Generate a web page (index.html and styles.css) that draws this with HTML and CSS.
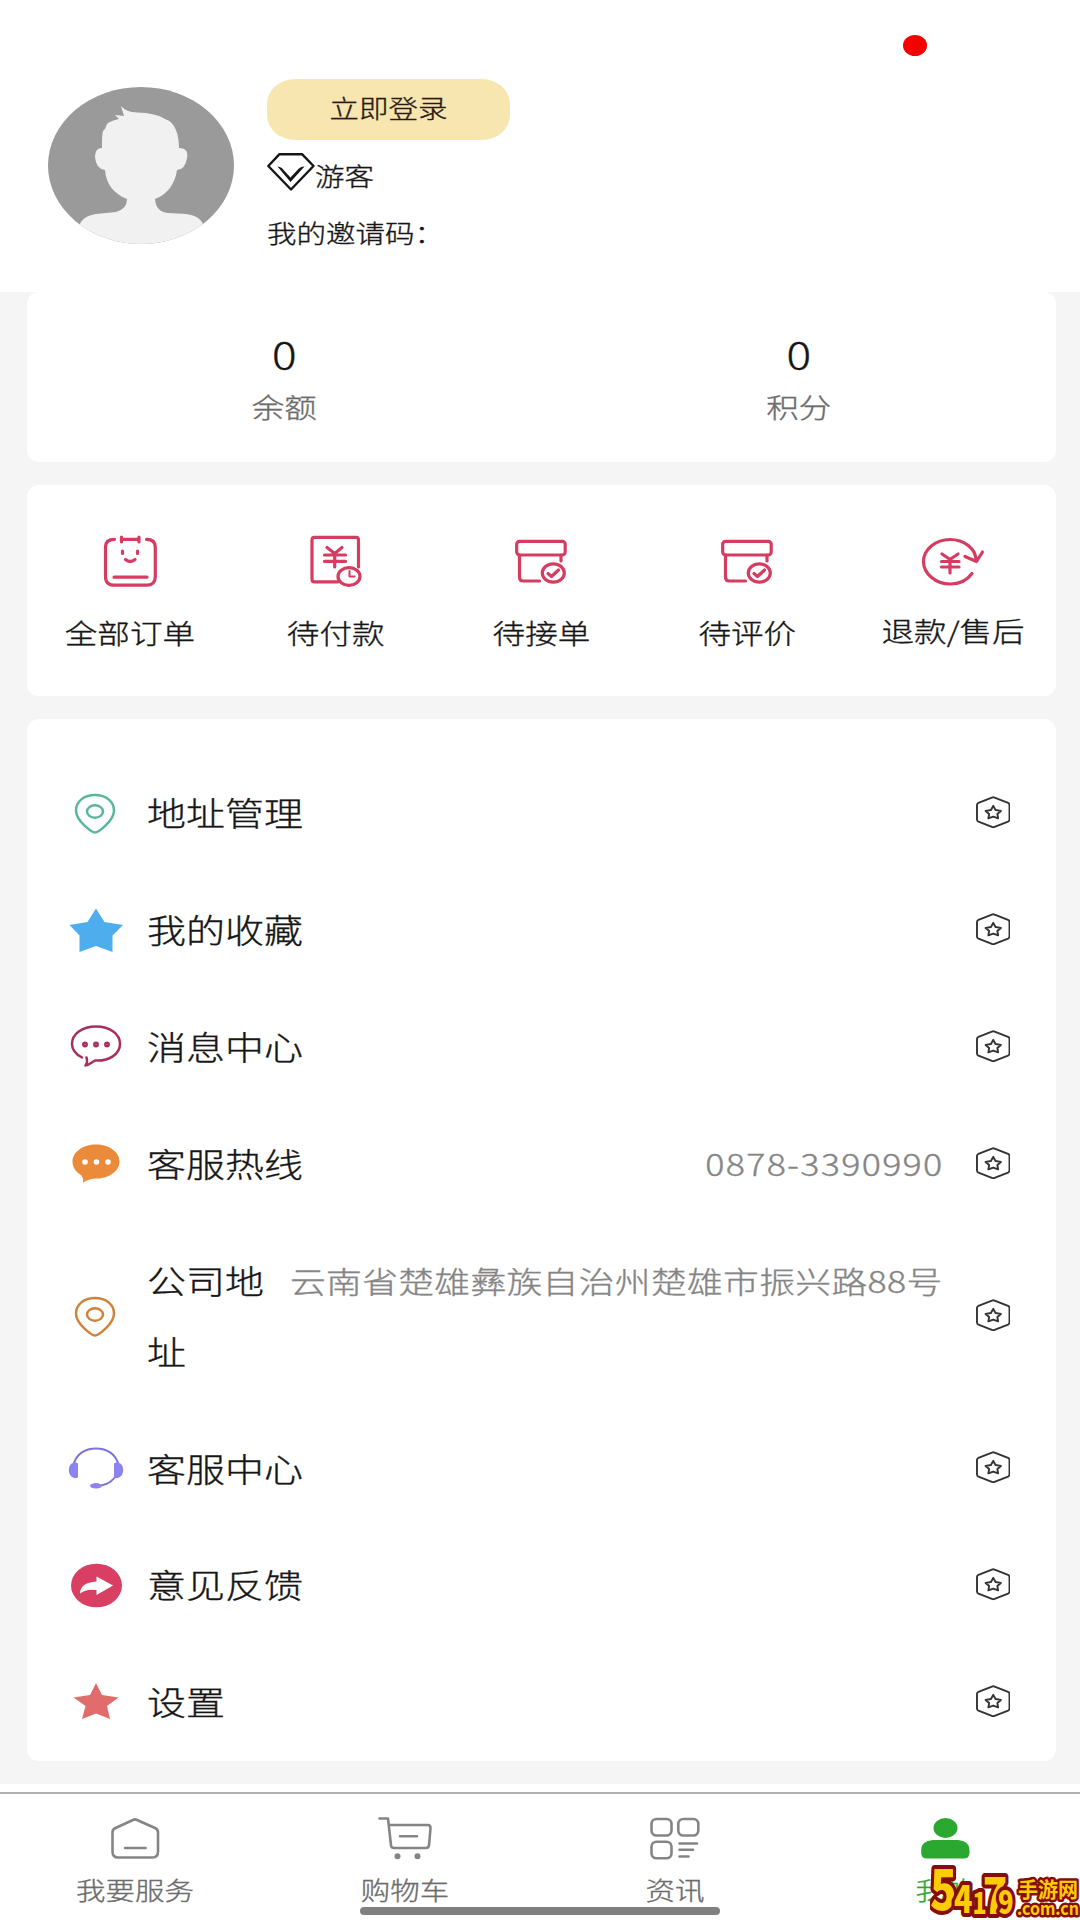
FILE: index.html
```html
<!DOCTYPE html>
<html lang="zh-CN">
<head>
<meta charset="utf-8">
<title>我的</title>
<link rel="stylesheet" href="styles.css">
</head>
<body>
<svg class="sprite" aria-hidden="true">
  <symbol id="hex" viewBox="0 0 36 34">
    <path d="M16.6 1.6Q18 1 19.4 1.6L33.5 7.3Q35 8 35 9.5V24.5Q35 26 33.5 26.7L19.4 32.400Q18 33 16.600 32.400L2.500 26.700Q1 26 1 24.500V9.500Q1 8 2.500 7.300Z"/>
    <path d="M18 10.300L20.400 14.700L26 15.600L22.300 18.800L23.100 23.400L18 21.500L12.900 23.400L13.700 18.800L10 15.600L15.600 14.700Z"/>
  </symbol>
  <symbol id="pin" viewBox="0 0 60 60">
    <path d="M29 48.500C26.500 48.500 10 37.500 10 26.500C10 17.500 18 11 29 11S48 17.500 48 26.500C48 37.500 31.500 48.500 29 48.500Z"/>
    <ellipse cx="29" cy="27.500" rx="8" ry="6.200"/>
  </symbol>
  <symbol id="box" viewBox="0 0 80 60">
    <rect x="15.700" y="11.300" width="48.500" height="13.700" rx="3"/>
    <path d="M18.500 25V47Q18.500 51 22 51H38.500M60 25V31"/>
    <ellipse cx="52.300" cy="43" rx="11" ry="9.200"/>
    <path d="M47 43.500L50.500 46.500L57.500 40"/>
  </symbol>
</svg>

<main class="page">
  <header class="profile">
    <svg class="avatar" viewBox="0 0 186 157">
      <clipPath id="face"><ellipse cx="93" cy="78.500" rx="93" ry="78.500"/></clipPath>
      <g clip-path="url(#face)">
        <rect width="186" height="157" fill="#9a9a9a"/>
        <path fill="#f1f1f1" d="M73 19Q78 25 89 25.500Q108 26 117 32C127 35 131 47 131 61Q141 61 139 71Q137 83 129 83C127 98 118 108 107 112Q108 125 120 126L138 127Q155 129 156 142V160H30V142Q33 129 48 127L68 125Q79 122 79 112C66 107 58 97 57 83Q48 82 47 70Q47 61 54 61C54 50 54 43 57 42Q58 34 71 32L67 28L76 29Z"/>
      </g>
    </svg>
    <div class="identity">
      <button class="login"><span class="t">立即登录</span></button>
      <div class="level">
        <svg width="48" height="38" viewBox="0 0 48 38"><path d="M12.500 1.200H35L46.500 13L24 36.500L1.300 13Z"/><path class="v" d="M10.500 13.500Q15 14 17 17.500L23.500 24.500L30 17.500Q33 13.500 37.500 13.500L23.500 29Z"/></svg>
        <span class="t">游客</span>
      </div>
      <div class="invite"><span class="t">我的邀请码：</span></div>
    </div>
    <i class="dot"></i>
  </header>

  <section class="card stats">
    <div class="stat"><b class="t">0</b><span class="t">余额</span></div>
    <div class="stat"><b class="t">0</b><span class="t">积分</span></div>
  </section>

  <section class="card orders">
    <a class="order"><svg viewBox="0 0 80 60"><path d="M24.500 9.300Q15.500 9.300 15.500 17V46.500Q15.500 55.200 24.500 55.200H56.500Q65.300 55.200 65.300 46.500V17Q65.300 9.300 56.500 9.300M31.500 7V12M49 7V12M31.500 9.300H49M24 47.200H57M32.500 21V23.500M47.500 21V23.500M35.500 29.500Q40 33.500 45 29.500"/></svg><span class="t">全部订单</span></a>
    <a class="order"><svg viewBox="0 0 80 60"><path d="M42 51.800H18.500Q16 51.800 16 49.500V10Q16 7.300 18.500 7.300H60Q62.500 7.300 62.500 10V37M31 17.500L38.700 23.500L46 17.500M28.500 25H49.500M28.500 31.300H49.500M38.700 24V37"/><ellipse cx="53" cy="46.500" rx="11" ry="8.800"/><path class="thin" d="M53.500 41V46.500H58.500"/></svg><span class="t">待付款</span></a>
    <a class="order"><svg><use href="#box"/></svg><span class="t">待接单</span></a>
    <a class="order"><svg><use href="#box"/></svg><span class="t">待评价</span></a>
    <a class="order lift"><svg viewBox="0 0 80 60"><path d="M59 43.500C54 50.500 46 54 37 54C22.500 54 10.500 43.500 10.500 31.500S22.500 9.500 37 9.500C51 9.500 63 18.500 63 30.500M52 26.500L63.500 31.500L69.500 22M29 24L37 29.500L45 24M28.500 31.500H46M28.500 37H46M37 30V43"/></svg><span class="t">退款/售后</span></a>
  </section>

  <section class="card menu">
    <a class="row"><svg class="ico line green"><use href="#pin"/></svg><span class="label t">地址管理</span><svg class="hex"><use href="#hex"/></svg></a>
    <a class="row"><svg class="ico" viewBox="0 0 60 60"><path fill="#4eaeed" d="M30 7.500L38.500 21L57 24L46.500 34.500L46.500 51L30 45L13.500 51V34.500L3.500 24L21.500 21Z"/></svg><span class="label t">我的收藏</span><svg class="hex"><use href="#hex"/></svg></a>
    <a class="row"><svg class="ico line plum" viewBox="0 0 60 60"><path d="M16 40.500C9.500 37 6 32 6 27C6 17 16 9.500 30 9.500S54 17 54 27S43 44.500 29 43.500C26 45 23 48 19.500 48.500C22 45 21 42 20.500 40.500"/><circle cx="19" cy="27.500" r="1.700"/><circle cx="30" cy="27.500" r="1.700"/><circle cx="41" cy="27.500" r="1.700"/></svg><span class="label t">消息中心</span><svg class="hex"><use href="#hex"/></svg></a>
    <a class="row"><svg class="ico" viewBox="0 0 60 60"><path fill="#eb8a38" d="M30 10.500C43 10.500 53.500 18 53.500 27.500S43 44.500 30 44.500Q24 44.500 17 48.500Q17.500 44 15.500 41.500C9.500 38 6.500 33 6.500 27.500C6.500 18 17 10.500 30 10.500Z"/><g fill="#fff"><circle cx="19" cy="28" r="2.800"/><circle cx="30.500" cy="28" r="2.800"/><circle cx="42" cy="28" r="2.800"/></g></svg><span class="label t">客服热线</span><span class="value phone t">0878-3390990</span><svg class="hex"><use href="#hex"/></svg></a>
    <a class="row tall"><svg class="ico line amber"><use href="#pin"/></svg><span class="label t">公司地址</span><span class="value t">云南省楚雄彝族自治州楚雄市振兴路88号</span><svg class="hex"><use href="#hex"/></svg></a>
    <a class="row"><svg class="ico" viewBox="0 0 60 60"><path fill="none" stroke="#7b73d8" stroke-width="2" d="M7.500 26C10 15 19 9.500 30 9.500S50 15 52.500 26M50 36C48 41 42 45.500 35 46.500"/><path fill="#8d83ee" d="M12 24.500V38.500Q9 40 6 38Q3 36 2.800 31Q3 25 7 24Q10 23 12 24.500ZM48 24.500V38.500Q51 40 54 38Q57 36 57.200 31Q57 25 53 24Q50 23 48 24.500Z"/><ellipse fill="#8d83ee" cx="30" cy="46.800" rx="6" ry="2.700"/></svg><span class="label t">客服中心</span><svg class="hex"><use href="#hex"/></svg></a>
    <a class="row"><svg class="ico" viewBox="0 0 60 60"><ellipse cx="30.500" cy="29.500" rx="25.500" ry="21.800" fill="#d93f62"/><path fill="#fff" d="M14 37.500Q14 26.500 30.500 25.500V20.500L47 29.500L30.500 39V34Q20 32.500 14 37.500Z"/></svg><span class="label t">意见反馈</span><svg class="hex"><use href="#hex"/></svg></a>
    <a class="row"><svg class="ico" viewBox="0 0 60 60"><path fill="#e06c6c" d="M30 10L36 22L52.500 24.500L41 33L44 46L30 40.500L16 46L19.500 33L7.500 24.500L24 22Z"/></svg><span class="label t">设置</span><svg class="hex"><use href="#hex"/></svg></a>
  </section>

  <nav class="tabs">
    <a class="tab"><svg viewBox="0 0 60 50"><path d="M28.500 6.700Q30 6 31.500 6.700L50 15Q53 16.500 53 19V38.500Q53 44.500 47.500 44.500H13Q7.500 44.500 7.500 38.500V19Q7.500 16.500 10.500 15Z"/><path d="M20 35H40.500"/></svg><span class="t">我要服务</span></a>
    <a class="tab"><svg viewBox="0 0 60 50"><path d="M4.500 5.500H13L16 32.500Q16.500 35 19 35H51Q53.500 35 54 32.500L55.500 15Q55.500 12 53 12H14M25 23.300H42"/><circle class="fill" cx="22.500" cy="43.300" r="3"/><circle class="fill" cx="42.500" cy="43.300" r="3"/></svg><span class="t">购物车</span></a>
    <a class="tab"><svg viewBox="0 0 60 50"><rect x="6.500" y="6" width="20" height="16.500" rx="5"/><rect x="33.300" y="6" width="20" height="16.500" rx="5"/><rect x="6.500" y="28.700" width="20" height="16.500" rx="5"/><path d="M34.500 30.500H52M34.500 36.800H48M34.500 43.500H43.500"/></svg><span class="t">资讯</span></a>
    <a class="tab active"><svg viewBox="0 0 60 50"><ellipse cx="30.500" cy="15" rx="12" ry="10"/><path d="M18 27H43Q54.500 28 54.500 37V40Q54.500 45.500 48.500 45.500H12Q6.200 45.500 6.200 40V37Q6.200 28 18 27Z"/></svg><span class="t">我的</span></a>
    <i class="home-bar"></i>
    <svg class="badge" viewBox="0 0 150 60">
      <text class="digits" transform="scale(.8 1)"><tspan x="0" y="50" font-size="55">5</tspan><tspan x="30" y="53" font-size="38">4</tspan><tspan x="53" y="54" font-size="29">1</tspan><tspan x="66" y="54" font-size="50">7</tspan><tspan x="85" y="54" font-size="32">9</tspan></text>
      <text x="88" y="37" font-size="21" textLength="60" lengthAdjust="spacingAndGlyphs">手游网</text>
      <text x="87" y="55" font-size="18" textLength="62" lengthAdjust="spacingAndGlyphs">.com.cn</text>
    </svg>
  </nav>
</main>
</body>
</html>
```
FILE: styles.css
```css
* { box-sizing: border-box; }

body {
  margin: 0;
  background: #f5f5f5;
  color: #161616;
  font-family: "Noto Sans CJK SC", sans-serif;
  font-weight: 300;
}

.sprite { position: absolute; width: 0; height: 0; }

.page {
  width: 1080px;
  height: 1920px;
  display: flex;
  flex-direction: column;
  overflow: hidden;
}

/* Wide letterforms used across the whole interface */
.t {
  display: block;
  white-space: nowrap;
  transform: scaleY(.84);
  -webkit-text-stroke: .4px currentColor;
}

.profile {
  position: relative;
  height: 292px;
  flex: none;
  display: flex;
  align-items: flex-start;
  gap: 33px;
  padding: 79px 48px 0;
  background: #fff;
  font-size: 29.5px;
  line-height: 40px;
}
.avatar { width: 186px; height: 157px; margin-top: 8px; }
.identity { display: flex; flex-direction: column; }
.login {
  width: 243px;
  height: 61px;
  padding: 0 0 5px;
  border: 0;
  border-radius: 28px / 25px;
  background: #f7e6b0;
  color: #2a1a14;
  font: inherit;
  display: flex;
  align-items: center;
  justify-content: center;
}
.level { display: flex; height: 59px; padding-top: 13px; }
.level .t { padding-top: 2px; }
.level svg { fill: none; stroke: #161616; stroke-width: 2.4; stroke-linejoin: round; }
.level .v { fill: #161616; stroke: none; }
.invite { padding-top: 13px; }
.dot {
  position: absolute;
  left: 903px;
  top: 35px;
  width: 24px;
  height: 21px;
  border-radius: 50%;
  background: #f80000;
}

.card { width: 1029px; margin-left: 27px; border-radius: 12px; background: #fff; flex: none; }

.stats { display: flex; height: 170px; }
.stat {
  flex: 1;
  display: flex;
  flex-direction: column;
  align-items: center;
  gap: 3px;
  padding-top: 36px;
  color: #6c6c6c;
  font-size: 32.5px;
  line-height: 50px;
}
.stat b { color: #161616; font-size: 46px; font-weight: 300; }

.orders { display: flex; height: 211px; margin-top: 23px; padding-top: 45px; }
.order {
  flex: 1 1 0;
  display: flex;
  flex-direction: column;
  align-items: center;
  gap: 22px;
  font-size: 32.6px;
  line-height: 40px;
}
.order svg {
  width: 80px;
  height: 60px;
  fill: none;
  stroke: #d43c62;
  stroke-width: 3.2;
  stroke-linecap: round;
  stroke-linejoin: round;
}
.order .thin { stroke-width: 2; }
.lift { gap: 19.5px; }

.menu { margin-top: 23px; padding-top: 35.5px; height: 1042px; display: flex; flex-direction: column; }
.row {
  height: 116.8px;
  flex: none;
  display: flex;
  align-items: center;
  padding: 0 46px 0 39px;
  font-size: 39px;
  line-height: 50px;
}
.ico { width: 60px; height: 60px; flex: none; margin: 2px 21px 0 0; }
.label { margin-top: -1px; }
.line { fill: none; stroke-width: 2.500; stroke-linecap: round; stroke-linejoin: round; }
.green { stroke: #58b795; }
.amber { stroke: #d08338; }
.plum { stroke: #a82f5c; }
.value { margin-left: auto; margin-top: -1px; color: #858585; font-size: 35.8px; letter-spacing: .3px; }
.phone { letter-spacing: 1.3px; }
.hex {
  width: 34.5px;
  height: 32.5px;
  flex: none;
  margin-left: auto;
  margin-top: -1px;
  fill: none;
  stroke: #333;
  stroke-width: 2;
  stroke-linejoin: round;
}
.value + .hex { margin-left: 33px; }
.phone + .hex { margin-left: 32px; }
.tall { height: 188px; }
.tall .label { width: 120px; white-space: normal; }
.tall .t { height: 168px; line-height: 84px; }

.tabs {
  position: relative;
  flex: 1;
  display: flex;
  margin-top: 23px;
  padding-top: 20px;
  background: linear-gradient(#fff 8px, #b0b0b0 8px, #b0b0b0 10px, #fff 10px);
}
.tab {
  flex: 1;
  display: flex;
  flex-direction: column;
  align-items: center;
  color: #6c6c6c;
  font-size: 29.5px;
  line-height: 40px;
}
.tab svg {
  width: 60px;
  height: 50px;
  margin: 9px 0 6px;
  fill: none;
  stroke: #858585;
  stroke-width: 2.600;
  stroke-linecap: round;
  stroke-linejoin: round;
}
.tab .fill { fill: #858585; stroke: none; }
.active { color: #2ba830; }
.active svg { fill: #2ba830; stroke: none; }

.home-bar {
  position: absolute;
  left: 360px;
  bottom: 5px;
  width: 360px;
  height: 8px;
  border-radius: 4px;
  background: #808080;
}
.badge {
  position: absolute;
  right: 0;
  bottom: 0;
  width: 150px;
  height: 60px;
  fill: #ffcb05;
  stroke: #850e0a;
  stroke-width: 5;
  stroke-linejoin: round;
  paint-order: stroke;
  font-weight: 700;
}
.digits { stroke-width: 8; font-weight: 900; }
```
